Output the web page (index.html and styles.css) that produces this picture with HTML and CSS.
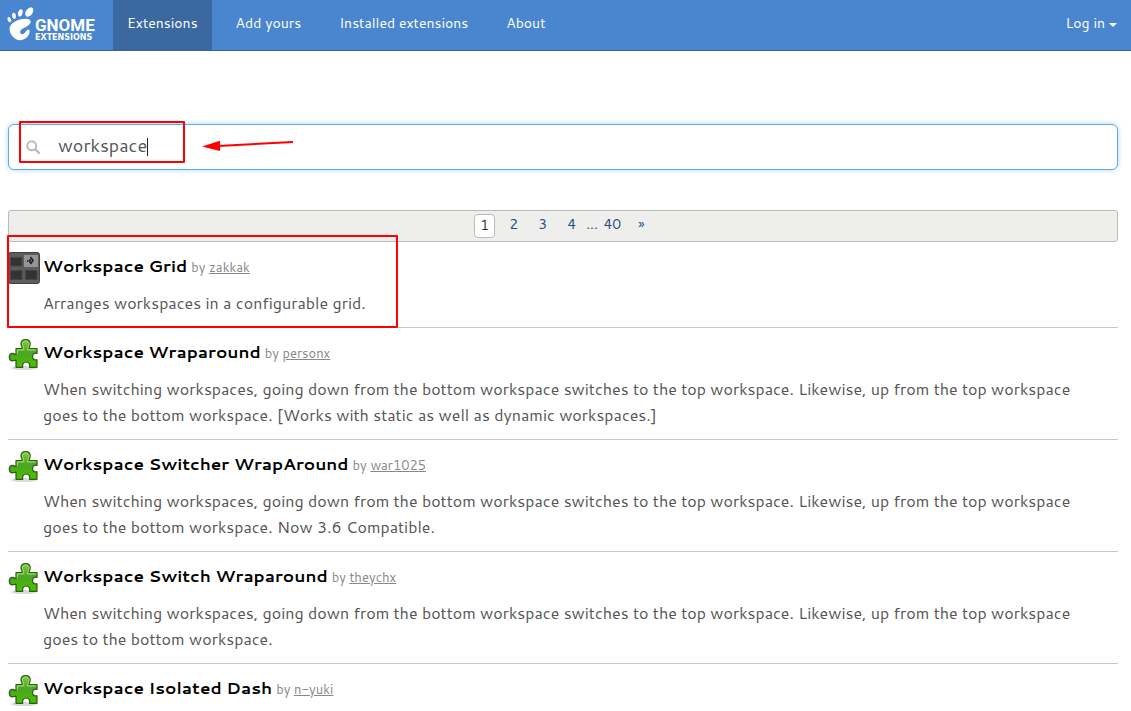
FILE: index.html
```html
<!DOCTYPE html>
<html lang="en">
<head>
<meta charset="utf-8">
<title>GNOME Shell Extensions</title>
<link rel="stylesheet" href="styles.css">
</head>
<body>
<svg class="defs" aria-hidden="true">
  <defs>
    <linearGradient id="leaf" x1="0" y1="0" x2="0" y2="1">
      <stop offset="0" stop-color="#7fce45"/>
      <stop offset="0.5" stop-color="#4aa520"/>
      <stop offset="1" stop-color="#4fc000"/>
    </linearGradient>
    <symbol id="puzzle" viewBox="0 0 32 32">
      <ellipse cx="16" cy="30" rx="13" ry="2" fill="#000" opacity="0.15"/>
      <path transform="translate(0 1)" d="M8 9.500H13.500C15.500 9.500 13 7.500 13 4.800C13 2.300 15 0.700 17.600 0.700S22.200 2.300 22.200 4.800C22.200 7.500 19.800 9.500 21.700 9.500H29V14.500C27.500 13.700 24.500 14.500 24.500 17.500S27.500 21.300 29 20.700V28.300H21.500C22.500 25.500 20.800 23 18.200 23S13.700 25.500 14.800 28.300H8V21.500C8 20.500 5.600 22.300 4 21.900C2.200 21.500 1.300 20 1.300 18S2.600 14.300 4.500 14.300C6.500 14.300 8 16.500 8 15Z" fill="url(#leaf)" stroke="#2a5c14" stroke-width="1.200" stroke-linejoin="round"/>
      <path transform="translate(0 1)" d="M9.300 15V10.900H15.500C16.500 9 14.400 7.500 14.400 4.800C14.400 3 15.600 2 17.600 2S20.900 3 20.900 4.800C20.900 7.500 18.800 9 19.800 10.900H27.800" fill="none" stroke="#a6e070" stroke-width="1"/>
    </symbol>
  </defs>
</svg>

<header class="topbar">
  <a class="logo" href="#" aria-label="GNOME Extensions">
    <svg class="foot" viewBox="0 0 28 34" aria-hidden="true">
      <g fill="#fff">
        <ellipse cx="22.300" cy="5" rx="3.300" ry="5.200" transform="rotate(36 22.300 5)"/>
        <ellipse cx="13.400" cy="5.800" rx="2.200" ry="3.700" transform="rotate(14 13.400 5.800)"/>
        <ellipse cx="7" cy="8.800" rx="1.900" ry="3.100" transform="rotate(-6 7 8.800)"/>
        <ellipse cx="2.300" cy="12.600" rx="1.700" ry="2.700" transform="rotate(-25 2.300 12.600)"/>
        <path d="M22 12.300C17 10.300 5 13.500 2.800 20C1.300 26 7 33.500 13.500 33.200C19.500 32.900 23 27.500 22.600 23.800C22.300 21.600 20 22.500 18.800 24.500C17.500 26.800 15.500 28.200 13.800 26.500C12 24.500 14 22.200 17 21C21 19.300 26.500 15 22 12.300Z"/>
      </g>
    </svg>
    <span class="wordmark"><span class="word-top">GNOME</span><span class="word-sub">EXTENSIONS</span></span>
  </a>
  <nav class="nav">
    <a class="nav-link active" href="#">Extensions</a>
    <a class="nav-link" href="#">Add yours</a>
    <a class="nav-link" href="#">Installed extensions</a>
    <a class="nav-link" href="#">About</a>
  </nav>
  <button class="login" type="button">Log in <span class="caret"></span></button>
</header>

<main class="content">
  <form class="search">
    <svg class="search-icon" viewBox="0 0 16 16" aria-hidden="true">
      <circle cx="5.800" cy="5.800" r="4.500" fill="none" stroke="#bbb" stroke-width="2"/>
      <path d="M9 9L13.600 13.600" stroke="#bbb" stroke-width="2.400"/>
    </svg>
    <input class="search-input" type="text" value="workspace" aria-label="Search for extensions">
    <span class="text-cursor"></span>
    <span class="mark mark-search"></span>
    <svg class="arrow" viewBox="0 0 92 14" aria-hidden="true">
      <path d="M16 7L91 3" stroke="#f00" stroke-width="2"/>
      <path d="M0 7.500L18 1.800V12Z" fill="#f00"/>
    </svg>
  </form>

  <nav class="pages" aria-label="Pages">
    <a class="page current" href="#">1</a>
    <a class="page" href="#">2</a>
    <a class="page" href="#">3</a>
    <a class="page" href="#">4</a>
    <span class="dots">...</span>
    <a class="page" href="#">40</a>
    <a class="page" href="#">»</a>
  </nav>

  <ul class="list">
    <li class="item">
      <svg class="icon" viewBox="0 0 32 32" aria-hidden="true">
        <rect x="0.500" y="0.500" width="31" height="31" rx="2" fill="#5c5c5c" stroke="#424242"/>
        <path d="M2.500 5.500H14V14H2.500ZM2.500 18.500H14V27.500H2.500ZM17.500 18.500H29V27.500H17.500Z" fill="#333" stroke="#444"/>
        <rect x="16" y="3" width="14" height="12" fill="#959595"/>
        <path d="M22.500 5L25 8.500L22.500 12" fill="none" stroke="#222" stroke-width="1.600"/>
        <rect x="19" y="8" width="1.500" height="2" fill="#333"/>
        <rect x="21" y="7" width="2" height="4" fill="#333"/>
      </svg>
      <div class="body">
        <div class="head"><h2 class="name">Workspace Grid</h2><span class="by">by <a href="#">zakkak</a></span></div>
        <p class="desc">Arranges workspaces in a configurable grid.</p>
      </div>
      <span class="mark mark-item"></span>
    </li>
    <li class="item">
      <svg class="icon" aria-hidden="true"><use href="#puzzle"/></svg>
      <div class="body">
        <div class="head"><h2 class="name">Workspace Wraparound</h2><span class="by">by <a href="#">personx</a></span></div>
        <p class="desc">When switching workspaces, going down from the bottom workspace switches to the top workspace. Likewise, up from the top workspace goes to the bottom workspace. [Works with static as well as dynamic workspaces.]</p>
      </div>
    </li>
    <li class="item">
      <svg class="icon" aria-hidden="true"><use href="#puzzle"/></svg>
      <div class="body">
        <div class="head"><h2 class="name">Workspace Switcher WrapAround</h2><span class="by">by <a href="#">war1025</a></span></div>
        <p class="desc">When switching workspaces, going down from the bottom workspace switches to the top workspace. Likewise, up from the top workspace goes to the bottom workspace. Now 3.6 Compatible.</p>
      </div>
    </li>
    <li class="item">
      <svg class="icon" aria-hidden="true"><use href="#puzzle"/></svg>
      <div class="body">
        <div class="head"><h2 class="name">Workspace Switch Wraparound</h2><span class="by">by <a href="#">theychx</a></span></div>
        <p class="desc">When switching workspaces, going down from the bottom workspace switches to the top workspace. Likewise, up from the top workspace goes to the bottom workspace.</p>
      </div>
    </li>
    <li class="item">
      <svg class="icon" aria-hidden="true"><use href="#puzzle"/></svg>
      <div class="body">
        <div class="head"><h2 class="name">Workspace Isolated Dash</h2><span class="by">by <a href="#">n-yuki</a></span></div>
      </div>
    </li>
  </ul>
</main>
</body>
</html>
```

FILE: styles.css
```css
* { box-sizing: border-box; }

body {
  margin: 0;
  background: #fff;
  color: #555;
  font-family: Cantarell, "Noto Sans", "Open Sans", sans-serif;
  font-size: 16px;
  line-height: 26px;
}

a { color: inherit; }

.defs { position: absolute; width: 0; height: 0; }

.topbar {
  display: flex;
  height: 51px;
  background: #4a86cf;
  border-bottom: 1px solid #3465a4;
  color: #fff;
  font-size: 14px;
}

.logo {
  display: flex;
  width: 113px;
  padding: 7px 0 0 7px;
  color: #fff;
  text-decoration: none;
}

.foot { width: 28px; height: 34px; overflow: visible; }

.wordmark {
  display: flex;
  flex-direction: column;
  padding-top: 10px;
  font-weight: 700;
}

.word-top { font-family: Roboto, sans-serif; font-size: 17px; line-height: 17px; }
.word-sub { font-family: "DejaVu Sans", sans-serif; font-size: 8px; line-height: 8px; }

.nav { display: flex; gap: 10px; }

.nav-link {
  padding: 10px 14px 0;
  color: #fff;
  text-decoration: none;
}

.nav-link.active { background: #3a689f; }

.login {
  display: flex;
  align-items: center;
  gap: 4px;
  height: 46px;
  margin-left: auto;
  padding: 0 14px 0 0;
  border: 0;
  background: none;
  color: #fff;
  font: inherit;
}

.caret {
  margin-top: 4px;
  border: 4px solid transparent;
  border-top-color: #fff;
  border-bottom-width: 0;
}

.content { padding: 73px 13px 0 8px; }

.search { position: relative; }

.search-input {
  display: block;
  width: 100%;
  height: 46px;
  padding: 0 20px 5px 49px;
  border: 1px solid #5dade2;
  border-radius: 6px;
  outline: 0;
  box-shadow: 0 0 5px #a9d3f2;
  color: #555;
  font: inherit;
  font-size: 18px;
}

.search-icon { position: absolute; top: 16px; left: 18px; width: 16px; height: 16px; }
.text-cursor { position: absolute; top: 14px; left: 139px; width: 1px; height: 18px; background: #222; }

.mark { position: absolute; border: 2px solid #f00; border-radius: 1px; }
.mark-search { top: -3px; left: 11px; width: 166px; height: 42px; }
.mark-item { top: -7px; left: -1px; width: 391px; height: 93px; }
.arrow { position: absolute; top: 15px; left: 194px; width: 92px; height: 14px; }

.pages {
  display: flex;
  justify-content: center;
  align-items: center;
  gap: 8px;
  height: 32px;
  margin-top: 40px;
  border: 1px solid #babdb6;
  border-radius: 3px;
  background: #eeeeec;
  color: #204a87;
  font-size: 14px;
}

.page {
  width: 21px;
  height: 24px;
  line-height: 20px;
  text-align: center;
  text-decoration: none;
}

.page.current {
  border: 1px solid #babdb6;
  border-radius: 4px;
  background: #fff;
  color: #2e3436;
}

.dots { margin: 0 -4px; height: 24px; line-height: 20px; color: #555; }

.list { margin: 0; padding: 0; list-style: none; }

.item {
  position: relative;
  display: flex;
  gap: 3px;
  padding: 10px 0 11px;
  border-bottom: 1px solid #c8c8c8;
}

.item:last-child { padding-bottom: 0; border-bottom: 0; }

.icon { flex: none; width: 32px; height: 32px; }

.body { flex: 1; padding-right: 20px; }

.head { display: flex; align-items: baseline; gap: 4px; }

.name { margin: 0; color: #000; font-size: 17px; font-weight: 700; line-height: 26px; }

.by { color: #888; font-size: 13px; line-height: 20px; }

.desc { margin: 12px 0 0; }
```
